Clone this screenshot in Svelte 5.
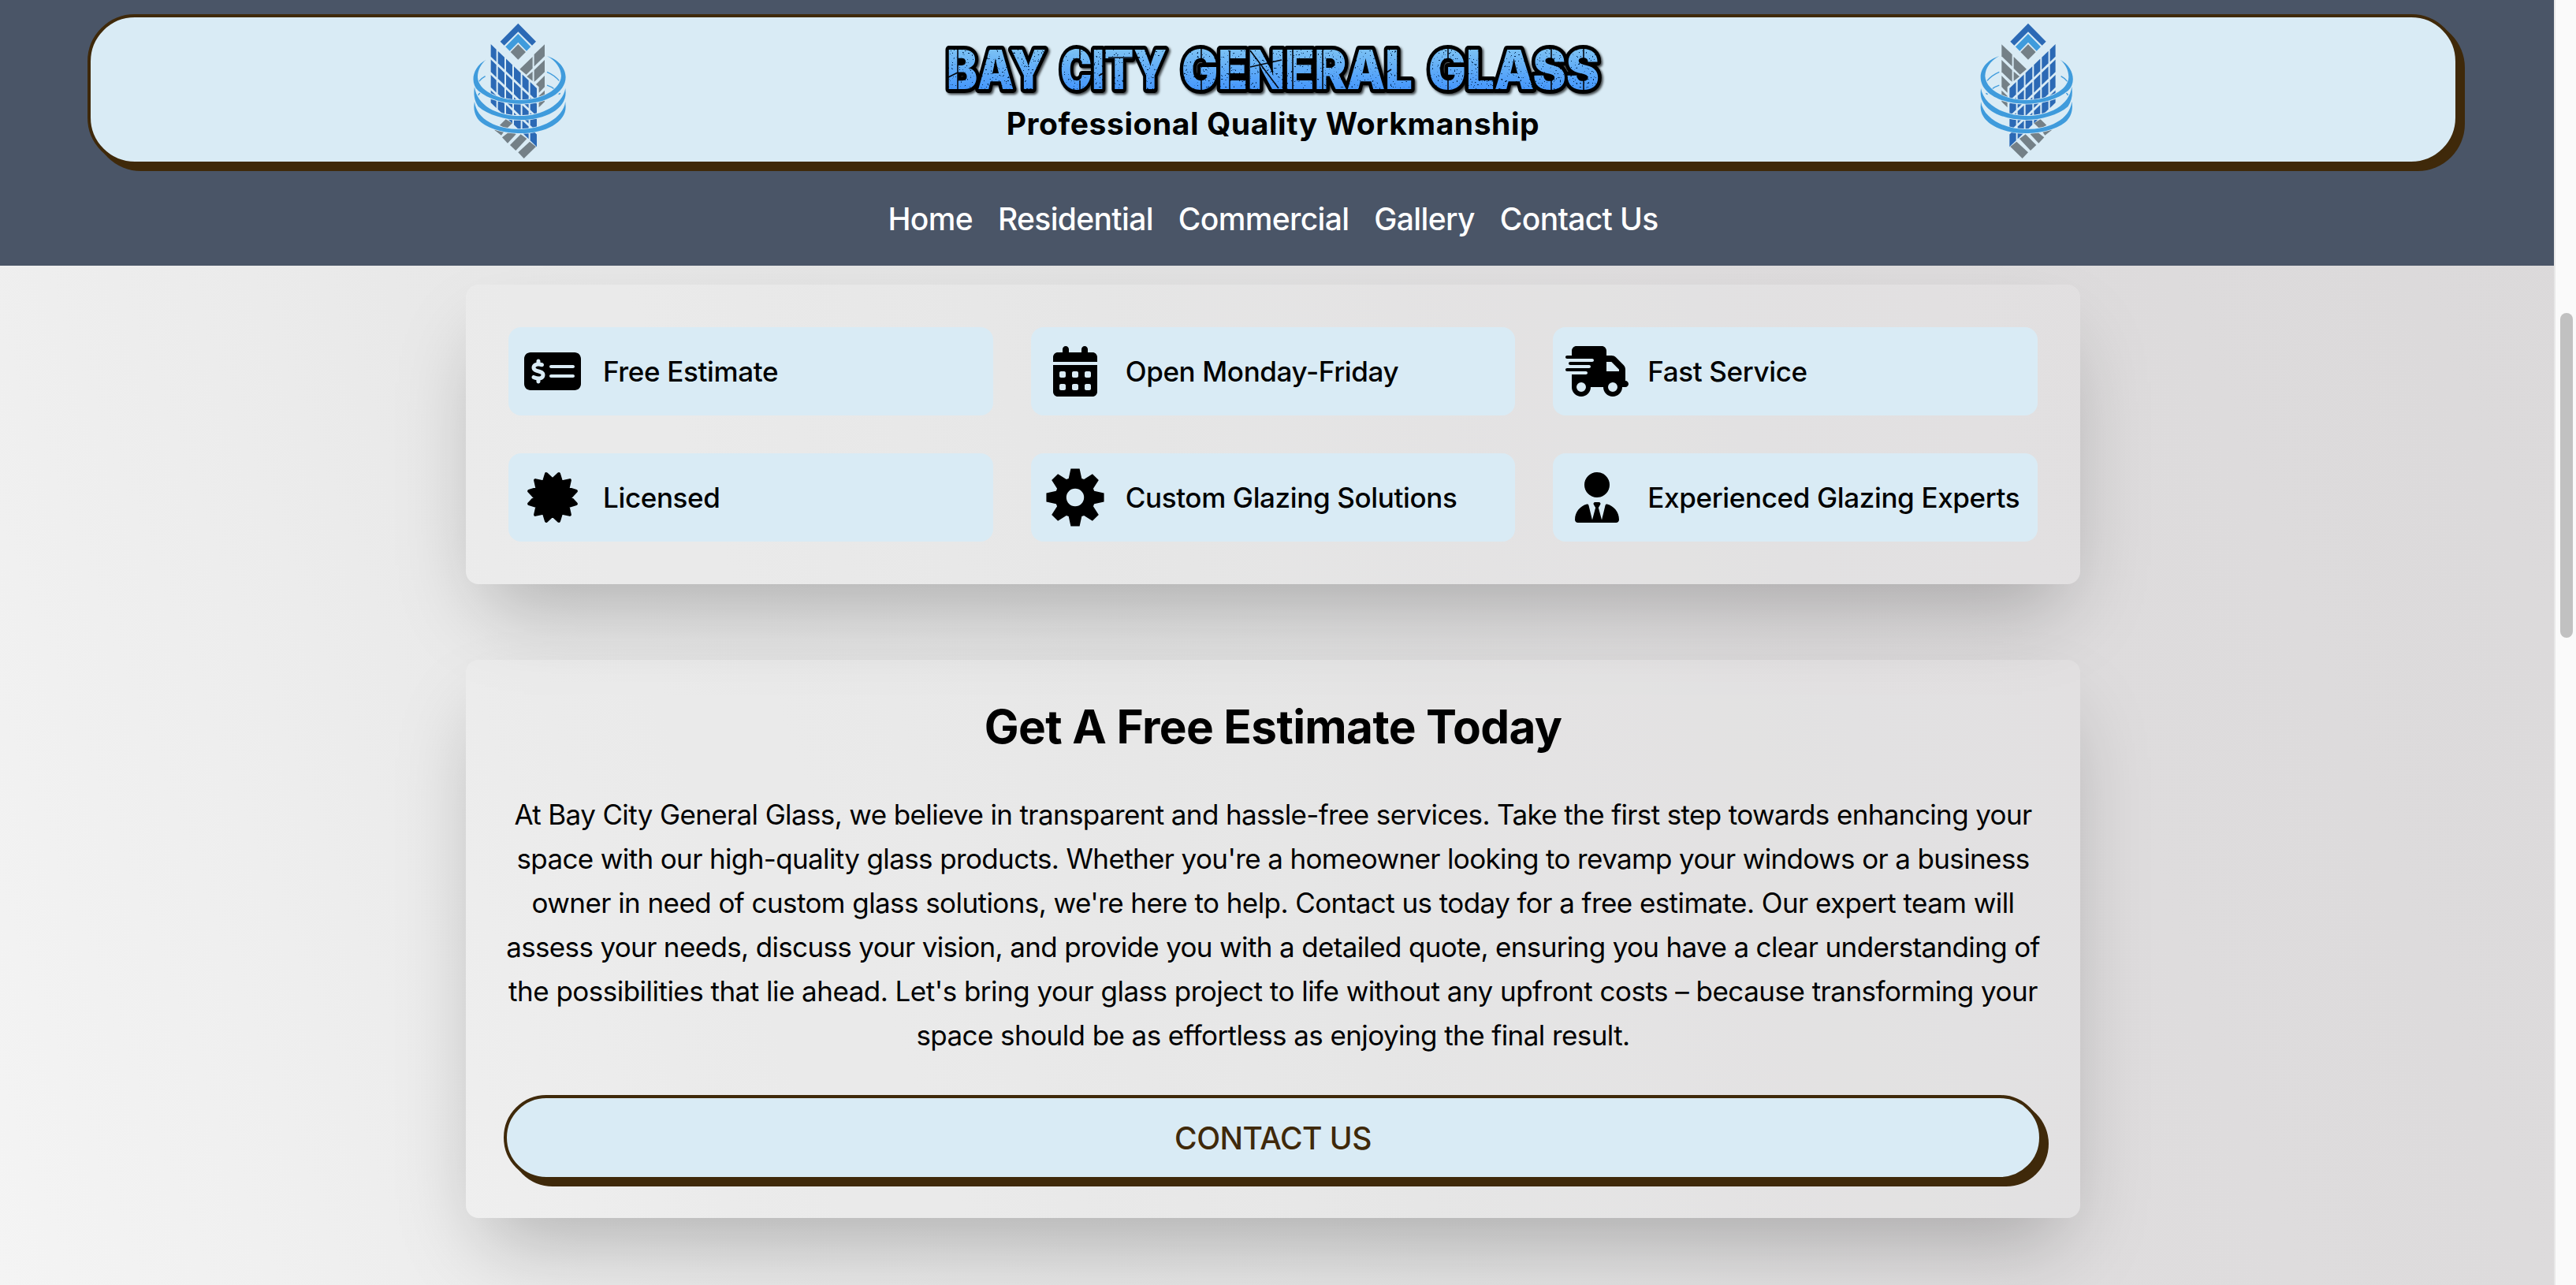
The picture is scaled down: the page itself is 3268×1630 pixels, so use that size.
<script>
  const nav = ['Home', 'Residential', 'Commercial', 'Gallery', 'Contact Us'];

  // Each line of the paragraph with its letter spacing in px
  const lines = [
    ['At Bay City General Glass, we believe in transparent and hassle-free services. Take the first step towards enhancing your', -0.63],
    ["space with our high-quality glass products. Whether you're a homeowner looking to revamp your windows or a business", -0.63],
    ["owner in need of custom glass solutions, we're here to help. Contact us today for a free estimate. Our expert team will", -0.57],
    ['assess your needs, discuss your vision, and provide you with a detailed quote, ensuring you have a clear understanding of', -0.65],
    ["the possibilities that lie ahead. Let's bring your glass project to life without any upfront costs – because transforming your", -0.52],
    ['space should be as effortless as enjoying the final result.', -0.58]
  ];

  const polar = (r, deg) => {
    const a = (deg * Math.PI) / 180;
    return [(r * Math.sin(a)).toFixed(2), (-r * Math.cos(a)).toFixed(2)];
  };
  const toPath = (pts) => 'M' + pts.map((p) => p.join(' ')).join('L') + 'Z';

  // Twelve-point seal
  const sealPts = [];
  for (let i = 0; i < 12; i++) {
    sealPts.push(polar(31, 15 + i * 30), polar(22.5, 30 + i * 30));
  }

  // Eight-tooth cog around a round hole
  const cogPts = [];
  for (let i = 0; i < 8; i++) {
    const c = i * 45;
    cogPts.push(polar(25.5, c - 19), polar(37, c - 8.7), polar(37, c + 8.7), polar(25.5, c + 19));
  }
  const hole = 'M11.2 0A11.2 11.2 0 1 0 -11.2 0A11.2 11.2 0 1 0 11.2 0Z';

  const features = [
    {
      label: 'Free Estimate', w: 72, h: 64, box: '0 0 576 512',
      d: 'M64 64C28.7 64 0 92.7 0 128V384c0 35.3 28.7 64 64 64H512c35.3 0 64-28.7 64-64V128c0-35.3-28.7-64-64-64H64zM272 192H496c8.8 0 16 7.2 16 16s-7.2 16-16 16H272c-8.8 0-16-7.2-16-16s7.2-16 16-16zM256 304c0-8.8 7.2-16 16-16H496c8.8 0 16 7.2 16 16s-7.2 16-16 16H272c-8.8 0-16-7.2-16-16zM164 152v13.9c7.5 1.2 14.6 2.9 21.1 4.7c10.7 2.8 17 13.8 14.2 24.5s-13.8 17-24.5 14.2c-11-2.9-21.6-5-31.2-5.2c-7.9-.1-16 1.8-21.5 5c-4.8 2.8-6.2 5.6-6.2 9.3c0 1.8 .1 3.5 5.3 6.7c6.3 3.8 15.5 6.7 28.3 10.5l.7 .2c11.2 3.4 25.6 7.7 37.1 15c12.9 8.1 24.3 21.3 24.6 41.6c.3 20.9-10.5 36.1-24.8 45c-7.2 4.5-15.2 7.3-23.2 9V360c0 11-9 20-20 20s-20-9-20-20V345.4c-10.3-2.2-20-5.5-28.2-8.4c-2.1-.7-4.1-1.4-6.1-2.1c-10.5-3.5-16.1-14.8-12.6-25.3s14.8-16.1 25.3-12.6c2.5 .8 4.9 1.7 7.2 2.4c13.6 4.6 24 8.1 35.1 8.5c8.6 .3 16.5-1.6 21.4-4.7c4.1-2.5 6-5.5 5.9-10.5c0-2.9-.8-5-5.9-8.2c-6.3-4-15.4-6.9-28-10.7l-1.7-.5c-10.9-3.3-24.6-7.4-35.6-14c-12.7-7.7-24.6-20.5-24.7-40.7c-.1-21.1 11.8-35.7 25.8-43.9c6.9-4.1 14.5-6.8 22.2-8.5V152c0-11 9-20 20-20s20 9 20 20z'
    },
    {
      label: 'Open Monday-Friday', w: 56, h: 64, box: '0 0 448 512',
      d: 'M128 0c17.7 0 32 14.3 32 32V64H288V32c0-17.7 14.3-32 32-32s32 14.3 32 32V64h48c26.5 0 48 21.5 48 48v48H0V112C0 85.5 21.5 64 48 64H96V32c0-17.7 14.3-32 32-32zM0 192H448V464c0 26.5-21.5 48-48 48H48c-26.5 0-48-21.5-48-48V192zm64 80v32c0 8.8 7.2 16 16 16h32c8.8 0 16-7.2 16-16V272c0-8.8-7.2-16-16-16H80c-8.8 0-16 7.2-16 16zm128 0v32c0 8.8 7.2 16 16 16h32c8.8 0 16-7.2 16-16V272c0-8.8-7.2-16-16-16H208c-8.8 0-16 7.2-16 16zm128 0v32c0 8.8 7.2 16 16 16h32c8.8 0 16-7.2 16-16V272c0-8.8-7.2-16-16-16H336c-8.8 0-16 7.2-16 16zM64 400v32c0 8.8 7.2 16 16 16h32c8.8 0 16-7.2 16-16V400c0-8.8-7.2-16-16-16H80c-8.8 0-16 7.2-16 16zm128 0v32c0 8.8 7.2 16 16 16h32c8.8 0 16-7.2 16-16V400c0-8.8-7.2-16-16-16H208c-8.8 0-16 7.2-16 16zm128 0v32c0 8.8 7.2 16 16 16h32c8.8 0 16-7.2 16-16V400c0-8.8-7.2-16-16-16H336c-8.8 0-16 7.2-16 16z'
    },
    {
      label: 'Fast Service', w: 80, h: 64, box: '0 0 640 512',
      d: 'M112 0C85.5 0 64 21.5 64 48V96H16c-8.8 0-16 7.2-16 16s7.2 16 16 16H64 272c8.8 0 16 7.2 16 16s-7.2 16-16 16H64 48c-8.8 0-16 7.2-16 16s7.2 16 16 16H64 240c8.8 0 16 7.2 16 16s-7.2 16-16 16H64 16c-8.8 0-16 7.2-16 16s7.2 16 16 16H64 208c8.8 0 16 7.2 16 16s-7.2 16-16 16H64V416c0 53 43 96 96 96s96-43 96-96H384c0 53 43 96 96 96s96-43 96-96h32c17.7 0 32-14.3 32-32s-14.3-32-32-32V288 256 237.3c0-17-6.7-33.3-18.7-45.3L512 114.7c-12-12-28.3-18.7-45.3-18.7H416V48c0-26.5-21.5-48-48-48H112zM544 237.3V256H416V160h50.7L544 237.3zM160 368a48 48 0 1 1 0 96 48 48 0 1 1 0-96zm272 48a48 48 0 1 1 96 0 48 48 0 1 1 -96 0z'
    },
    { label: 'Licensed', w: 70, h: 70, box: '-35 -35 70 70', d: toPath(sealPts), round: true },
    { label: 'Custom Glazing Solutions', w: 76, h: 76, box: '-38 -38 76 76', d: toPath(cogPts) + hole },
    {
      label: 'Experienced Glazing Experts', w: 56, h: 64, box: '0 0 448 512',
      d: 'M96 128a128 128 0 1 0 256 0A128 128 0 1 0 96 128zm94.5 200.2l18.6 31L175.8 483.1l-36-146.9c-2-8.1-9.8-13.4-17.9-11.3C51.9 342.4 0 405.8 0 481.3c0 17 13.8 30.7 30.7 30.7H162.5H168 280h5.5H417.3c17 0 30.7-13.8 30.7-30.7c0-75.5-51.9-138.9-121.9-156.4c-8.1-2-15.9 3.3-17.9 11.3l-36 146.9L238.9 359.2l18.6-31c6.4-10.7-1.3-24.2-13.7-24.2H224 204.3c-12.4 0-20.1 13.6-13.7 24.2z'
    }
  ];

  // Window panes of the blue tower: six columns, four rows, sloping down to the right
  const cols = [[126, 147], [153, 178], [184, 208], [214, 240], [246, 270], [276, 301]];
  const slope = 0.96;
  const panes = [];
  for (const [a, b] of cols) {
    for (let r = 0; r < 4; r++) {
      const t = 137 + r * 58.5;
      const ya = t + (a - 126) * slope;
      const yb = t + (b - 126) * slope;
      panes.push(`${a},${ya} ${b},${yb} ${b},${yb + 47} ${a},${ya + 47}`);
    }
  }

  // Orbit ribbons: crescents open at the top
  const ring = 'M108 196C55 225 46 285 78 314C115 347 180 364 240 364C335 364 411 322 411 262C411 225 380 195 340 182C375 202 393 228 394 258C392 310 320 350 237 350C150 350 78 312 76 264C75 238 88 212 108 196Z';
  const ribbon = 'M64 298C60 325 62 350 78 374C115 407 180 425 240 425C335 425 411 383 411 322L410 304C400 368 320 410 237 410C150 410 72 370 64 298Z';
  const ribbonLow = 'M64 356C58 385 66 410 82 428C115 460 180 476 240 476C335 476 411 434 411 376L410 356C400 420 320 461 237 461C150 461 72 425 64 356Z';

  const words = [
    ['BAY', 1201, 126], ['CITY', 1345, 135], ['GENERAL', 1499, 293], ['GLASS', 1812, 217]
  ];
  // Thin breaks cut through the lettering
  const cuts = [
    'M1215 62V114', 'M1370 62V75M1370 102V114', 'M1524 62V74M1524 102V114', 'M1837 62V74M1837 102V114',
    'M1406 73H1446', 'M1586 64L1622 112', 'M1586 85L1626 76', 'M1640 62V114', 'M1678 62V114',
    'M1203 98L1215 92', 'M1394 96L1408 88', 'M1753 96L1765 88', 'M1968 62V74M1968 102V114', 'M2009 62V74M2009 102V114',
    'M1560 64V114'
  ];
</script>

{#snippet logo(flip)}
  <svg class="logo" class:flip viewBox="55 50 370 530">
    <g fill="#2b69b5">
      <path d="M162 127L230 58L298 127L283 142L230 90L177 142Z" />
      {#each panes as p}<polygon points={p} />{/each}
    </g>
    <path fill="#3f9bdc" d="M182 147L230 98L278 147L262 163L230 130L198 163Z" />
    <g fill="#748087">
      <path d="M230 138L259 167L230 196L201 167Z" />
      <path d="M291 176L331 138V183L291 222Z" />
      <path d="M236 232L285 185V229L261 253Z" />
      <path d="M291 236L331 197V243L300 273L291 280Z" />
      <path d="M263 260L285 241V277Z" />
      <path d="M298 290L331 257V300L309 322V300Z" />
      <path d="M309 334L331 313V356L309 378Z" />
      <path d="M160 445L183 423L208 438L184 461Z" />
      <path d="M139 463L165 463L176 470L166 484Z" />
      <path d="M169 492L192 474H215L222 480L190 514Z" />
      <path d="M199 521L240 480L263 497L221 542Z" />
      <path d="M230 549L274 508L298 527L252 572Z" />
    </g>
    <g fill="none" stroke="#3f9bdc" stroke-width="4">
      <path d="M105 259Q88 268 80 280" />
      <path d="M340 243Q368 255 386 276" />
      <path d="M340 293Q356 298 368 308" />
      <path d="M88 320Q80 325 79 332M384 328L391 324" />
    </g>
    <g fill="#3f9bdc" stroke="#d9ebf5" stroke-width="5" paint-order="stroke">
      <path d={ribbonLow} />
      <path d={ribbon} />
      <path d={ring} />
    </g>
  </svg>
{/snippet}

<div class="window">
  <div class="page">
    <header>
      <div class="banner">
        {@render logo(false)}
        <div class="brand">
          <svg class="wordmark" viewBox="1185 50 860 80">
            <defs>
              <linearGradient id="sky" x1="0" y1="62" x2="0" y2="114" gradientUnits="userSpaceOnUse">
                <stop offset="0" stop-color="#7cc2f4" />
                <stop offset="1" stop-color="#4496fc" />
              </linearGradient>
              <filter id="grit" x="0" y="0" width="1" height="1">
                <feTurbulence type="fractalNoise" baseFrequency="0.42" numOctaves="2" seed="7" result="fine" />
                <feColorMatrix in="fine" type="matrix" values="0 0 0 0 0  0 0 0 0 0.02  0 0 0 0 0.08  -14 0 0 0 4.6" result="specks" />
                <feComposite in="specks" in2="SourceAlpha" operator="in" />
              </filter>
              <filter id="drop" x="-5%" y="-30%" width="110%" height="170%">
                <feDropShadow dx="2" dy="2" stdDeviation="1.6" flood-color="#000" flood-opacity="0.7" />
              </filter>
              <clipPath id="letters">
                {#each words as [t, x, w]}
                  <text {x} y="113" textLength={w} lengthAdjust="spacingAndGlyphs">{t}</text>
                {/each}
              </clipPath>
            </defs>
            <g class="outline" filter="url(#drop)">
              {#each words as [t, x, w]}
                <text {x} y="113" textLength={w} lengthAdjust="spacingAndGlyphs">{t}</text>
              {/each}
            </g>
            <g clip-path="url(#letters)">
              <rect x="1185" y="55" width="860" height="66" fill="url(#sky)" />
              <rect x="1185" y="55" width="860" height="66" filter="url(#grit)" />
              <g stroke="#04080f" stroke-width="1.6">
                {#each cuts as d}<path {d} />{/each}
              </g>
            </g>
          </svg>
          <div class="tagline">Professional Quality Workmanship</div>
        </div>
        {@render logo(true)}
      </div>
      <nav>
        {#each nav as n}<span>{n}</span>{/each}
      </nav>
    </header>

    <main>
      <section class="card features">
        {#each features as f}
          <div class="feature">
            <div class="icon">
              <svg width={f.w} height={f.h} viewBox={f.box} class:round={f.round}>
                <path d={f.d} fill-rule="evenodd" />
              </svg>
            </div>
            <span>{f.label}</span>
          </div>
        {/each}
      </section>

      <section class="card estimate">
        <h2>Get A Free Estimate Today</h2>
        <p>
          {#each lines as [text, tracking]}<span style="letter-spacing: {tracking}px">{text}</span>{/each}
        </p>
        <button>CONTACT US</button>
      </section>
    </main>
  </div>
  <div class="scrollbar"><div class="thumb"></div></div>
</div>

<style>
  :global(body) {
    margin: 0;
    overflow: hidden;
  }
  .window {
    display: flex;
    width: 3268px;
    height: 1630px;
    overflow: hidden;
    font-family: Inter, 'Liberation Sans', sans-serif;
    color: #000;
  }
  .page {
    width: 3240px;
    height: 1630px;
    flex: none;
    overflow: hidden;
    background: linear-gradient(70deg, #f4f4f4 0%, #e9e9e9 25%, #e3e3e3 48%, #dfddde 68%, #dbd9da 100%);
  }
  header {
    position: relative;
    z-index: 1;
    box-sizing: border-box;
    height: 337px;
    padding: 18px 10px 0 0;
    background: #4a5567;
    display: flex;
    flex-direction: column;
    align-items: center;
  }
  .banner {
    box-sizing: border-box;
    width: 3008px;
    height: 191px;
    border: 4px solid #3f290a;
    border-radius: 60px;
    background: #d9ebf5;
    box-shadow: 8px 8px 0 #3f290a;
    display: flex;
    justify-content: center;
    gap: 463px;
  }
  .logo {
    width: 123.3px;
    height: 176.7px;
    margin-top: 4.7px;
    flex: none;
  }
  .flip {
    transform: scaleX(-1);
  }
  .brand {
    width: 860px;
    padding-top: 28px;
    flex: none;
  }
  .wordmark {
    display: block;
    width: 860px;
    height: 80px;
    font-size: 69px;
    font-weight: 900;
    overflow: visible;
  }
  .outline {
    fill: #000;
    stroke: #000;
    stroke-width: 10px;
    stroke-linejoin: round;
  }
  .tagline {
    font-size: 39px;
    line-height: 53px;
    font-weight: 700;
    letter-spacing: 0.56px;
    text-align: center;
    white-space: nowrap;
  }
  nav {
    display: flex;
    gap: 32px;
    margin-top: 39px;
    font-size: 39px;
    line-height: 60px;
    font-weight: 500;
    letter-spacing: -0.65px;
    color: #fff;
  }
  main {
    padding: 24px 10px 0 0;
    display: flex;
    flex-direction: column;
    align-items: center;
    gap: 96px;
  }
  .card {
    box-sizing: border-box;
    width: 2048px;
    border-radius: 16px;
    background: rgba(255, 255, 255, 0.12);
    box-shadow: 0 50px 100px -24px rgba(0, 0, 0, 0.25);
  }
  .features {
    height: 380px;
    padding: 54px;
    display: grid;
    grid-template-columns: repeat(3, 1fr);
    grid-auto-rows: 112px;
    gap: 48px;
  }
  .feature {
    box-sizing: border-box;
    padding-left: 16px;
    border-radius: 16px;
    background: #d9ebf5;
    display: flex;
    align-items: center;
    gap: 24px;
    font-size: 35px;
    font-weight: 500;
    letter-spacing: -0.36px;
    white-space: nowrap;
  }
  .icon {
    width: 80px;
    flex: none;
    display: flex;
    justify-content: center;
  }
  .round path {
    stroke: #000;
    stroke-width: 4px;
    stroke-linejoin: round;
  }
  .estimate {
    height: 708px;
    padding: 48px;
    text-align: center;
  }
  h2 {
    margin: 0;
    font-size: 58.5px;
    line-height: 73px;
    font-weight: 700;
    letter-spacing: -0.64px;
  }
  p {
    margin: 47px -10px 48px;
    font-size: 35px;
    line-height: 56px;
  }
  p span {
    display: block;
    white-space: nowrap;
  }
  button {
    display: block;
    box-sizing: border-box;
    width: 100%;
    height: 108px;
    padding: 0;
    border: 4px solid #3f290a;
    border-radius: 60px;
    background: #d9ebf5;
    box-shadow: 8px 8px 0 #3f290a;
    font: 500 39px Inter, 'Liberation Sans', sans-serif;
    letter-spacing: -0.5px;
    color: #3f290a;
  }
  .scrollbar {
    box-sizing: border-box;
    width: 28px;
    height: 1630px;
    flex: none;
    padding: 397px 0 0 6px;
    border-left: 2px solid #e8e8e8;
    background: #fafafa;
  }
  .thumb {
    width: 16px;
    height: 412px;
    border-radius: 8px;
    background: #c1c1c1;
  }
</style>
